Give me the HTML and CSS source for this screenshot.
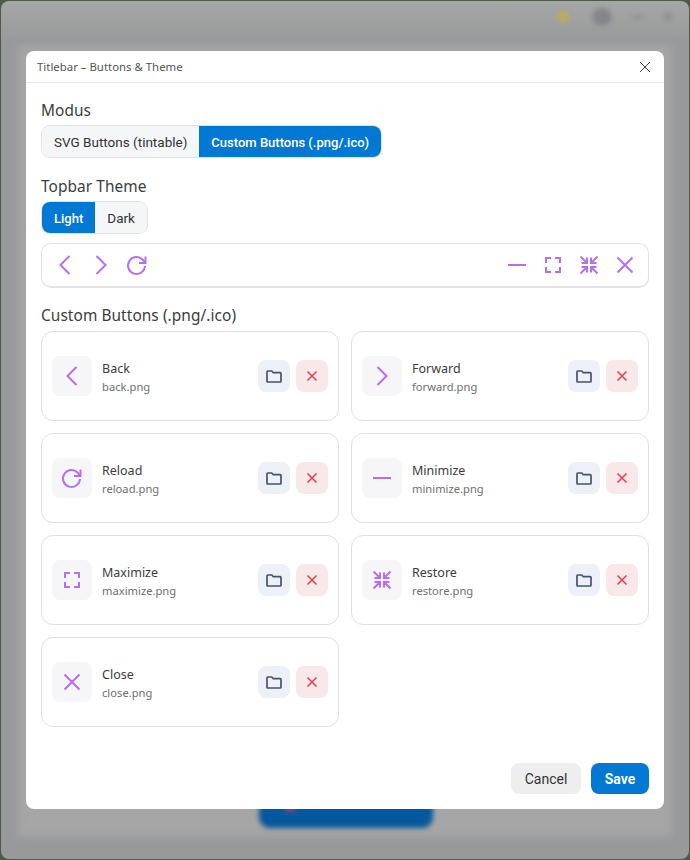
FILE: index.html
```html
<!DOCTYPE html>
<html lang="en">
<head>
    <meta charset="UTF-8">
    <meta name="viewport" content="width=device-width, initial-scale=1.0">
    <title>Titlebar – Buttons &amp; Theme</title>
    <link rel="stylesheet" href="styles.css">
</head>
<body>
    <svg class="defs" width="0" height="0" aria-hidden="true">
        <defs>
            <symbol id="i-back" viewBox="0 0 24 24"><path d="M16.500 3 7.500 12l9 9"/></symbol>
            <symbol id="i-forward" viewBox="0 0 24 24"><path d="M7.500 3 16.500 12l-9 9"/></symbol>
            <symbol id="i-reload" viewBox="0 0 24 24"><path d="M20 13a8.500 8.500 0 1 1-2.300-6.300L20.500 10"/><path d="M20.500 3.500V10H14"/></symbol>
            <symbol id="i-min" viewBox="0 0 24 24"><path d="M3 12h18"/></symbol>
            <symbol id="i-max" viewBox="0 0 24 24"><path d="M10 5H5v5M14 5h5v5M10 19H5v-5M14 19h5v-5"/></symbol>
            <symbol id="i-restore" viewBox="0 0 24 24"><path d="M3.500 3.500l6.500 6.500M10 4.500V10H4.500M20.500 3.500L14 10M14 4.500V10h5.500M3.500 20.500L10 14M10 19.500V14H4.500M20.500 20.500L14 14M14 19.500V14h5.500"/></symbol>
            <symbol id="i-close" viewBox="0 0 24 24"><path d="M4.500 4.500l15 15M19.500 4.500l-15 15"/></symbol>
            <symbol id="i-folder" viewBox="0 0 16 16"><path d="M1 3.800c0-.5.300-.8.800-.8h4l1.500 1.700h6.900c.5 0 .8.300.8.800v7.700c0 .5-.3.800-.8.800H1.800c-.5 0-.8-.3-.8-.8z"/></symbol>
            <symbol id="i-x" viewBox="0 0 16 16"><path d="M3.500 3.500l9 9M12.500 3.500l-9 9"/></symbol>
        </defs>
    </svg>

    <div class="desktop">
        <div class="app-window">
            <div class="blur-panel"></div>
            <div class="blur-icons">
                <span class="blur-dot yellow"></span>
                <span class="blur-dot grey"></span>
                <span class="blur-dot dash"></span>
                <span class="blur-dot faint"></span>
            </div>
            <div class="blur-button"><span class="blur-spot"></span></div>
        </div>

        <div class="modal">
            <div class="modal-header">
                <span class="modal-title">Titlebar – Buttons &amp; Theme</span>
                <svg class="modal-close" viewBox="0 0 12 12"><path d="M1 1l10 10M11 1L1 11"/></svg>
            </div>

            <div class="modal-body">
                <div class="section-label">Modus</div>
                <div class="segmented">
                    <button class="seg">SVG Buttons (tintable)</button>
                    <button class="seg active">Custom Buttons (.png/.ico)</button>
                </div>

                <div class="section-label theme-label">Topbar Theme</div>
                <div class="segmented">
                    <button class="seg active">Light</button>
                    <button class="seg">Dark</button>
                </div>

                <div class="preview">
                    <div class="preview-group">
                        <svg class="ico"><use href="#i-back"/></svg>
                        <svg class="ico"><use href="#i-forward"/></svg>
                        <svg class="ico"><use href="#i-reload"/></svg>
                    </div>
                    <div class="preview-group">
                        <svg class="ico"><use href="#i-min"/></svg>
                        <svg class="ico"><use href="#i-max"/></svg>
                        <svg class="ico"><use href="#i-restore"/></svg>
                        <svg class="ico"><use href="#i-close"/></svg>
                    </div>
                </div>

                <div class="section-label custom-label">Custom Buttons (.png/.ico)</div>
                <div class="card-grid">
                    <div class="card">
                        <div class="tile"><svg class="ico"><use href="#i-back"/></svg></div>
                        <div class="card-text"><div class="card-name">Back</div><div class="card-file">back.png</div></div>
                        <button class="icon-btn open"><svg><use href="#i-folder"/></svg></button>
                        <button class="icon-btn remove"><svg><use href="#i-x"/></svg></button>
                    </div>
                    <div class="card">
                        <div class="tile"><svg class="ico"><use href="#i-forward"/></svg></div>
                        <div class="card-text"><div class="card-name">Forward</div><div class="card-file">forward.png</div></div>
                        <button class="icon-btn open"><svg><use href="#i-folder"/></svg></button>
                        <button class="icon-btn remove"><svg><use href="#i-x"/></svg></button>
                    </div>
                    <div class="card">
                        <div class="tile"><svg class="ico"><use href="#i-reload"/></svg></div>
                        <div class="card-text"><div class="card-name">Reload</div><div class="card-file">reload.png</div></div>
                        <button class="icon-btn open"><svg><use href="#i-folder"/></svg></button>
                        <button class="icon-btn remove"><svg><use href="#i-x"/></svg></button>
                    </div>
                    <div class="card">
                        <div class="tile"><svg class="ico"><use href="#i-min"/></svg></div>
                        <div class="card-text"><div class="card-name">Minimize</div><div class="card-file">minimize.png</div></div>
                        <button class="icon-btn open"><svg><use href="#i-folder"/></svg></button>
                        <button class="icon-btn remove"><svg><use href="#i-x"/></svg></button>
                    </div>
                    <div class="card">
                        <div class="tile"><svg class="ico"><use href="#i-max"/></svg></div>
                        <div class="card-text"><div class="card-name">Maximize</div><div class="card-file">maximize.png</div></div>
                        <button class="icon-btn open"><svg><use href="#i-folder"/></svg></button>
                        <button class="icon-btn remove"><svg><use href="#i-x"/></svg></button>
                    </div>
                    <div class="card">
                        <div class="tile"><svg class="ico"><use href="#i-restore"/></svg></div>
                        <div class="card-text"><div class="card-name">Restore</div><div class="card-file">restore.png</div></div>
                        <button class="icon-btn open"><svg><use href="#i-folder"/></svg></button>
                        <button class="icon-btn remove"><svg><use href="#i-x"/></svg></button>
                    </div>
                    <div class="card">
                        <div class="tile"><svg class="ico"><use href="#i-close"/></svg></div>
                        <div class="card-text"><div class="card-name">Close</div><div class="card-file">close.png</div></div>
                        <button class="icon-btn open"><svg><use href="#i-folder"/></svg></button>
                        <button class="icon-btn remove"><svg><use href="#i-x"/></svg></button>
                    </div>
                </div>
            </div>

            <div class="modal-footer">
                <button class="btn cancel">Cancel</button>
                <button class="btn save">Save</button>
            </div>
        </div>
    </div>
</body>
</html>
```

FILE: styles.css
```css
* { box-sizing: border-box; }
html, body { margin: 0; height: 100%; overflow: hidden; }
body { background: #4e5a48; font-family: "Noto Sans", "Liberation Sans", sans-serif; color: #333; }
button { font-family: Roboto, "Liberation Sans", sans-serif; border: 0; margin: 0; padding: 0; }
.defs { position: absolute; }

.desktop { position: relative; width: 690px; height: 860px; padding: 51px 26px; }

/* window behind the dialog, dimmed and blurred */
.app-window {
    position: absolute;
    inset: 1px;
    border-radius: 8px;
    overflow: hidden;
    background: linear-gradient(#a5a7a5 0, #a0a2a1 18px, #98999b 40px, #98999b 100%);
}
.blur-panel {
    position: absolute;
    inset: 44px 17px 22px;
    background: #a6a6a6;
    filter: blur(4px);
}
.blur-icons { position: absolute; top: 6px; right: 16px; display: flex; align-items: center; height: 20px; filter: blur(2.500px); }
.blur-dot { display: block; width: 10px; height: 10px; border-radius: 50%; }
.blur-dot.yellow { width: 12px; height: 12px; margin-right: 23px; background: #bcab5c; }
.blur-dot.grey { width: 20px; height: 18px; margin-right: 19px; background: #84858a; }
.blur-dot.dash { width: 14px; height: 4px; margin-right: 18px; background: #8f9193; }
.blur-dot.faint { background: #8f9193; }
.blur-button {
    position: absolute;
    left: 258px;
    top: 780px;
    width: 174px;
    height: 47px;
    border-radius: 11px;
    background: #05589c;
    filter: blur(2.500px);
}
.blur-spot {
    position: absolute;
    left: 26px;
    top: 24px;
    width: 10px;
    height: 6px;
    background: #a0466a;
}

.modal {
    position: relative;
    display: flex;
    flex-direction: column;
    width: 638px;
    height: 758px;
    background: #fff;
    border-radius: 8px;
}
.modal-header {
    display: flex;
    justify-content: space-between;
    align-items: center;
    height: 32px;
    padding: 0 13px 0 11px;
    border-bottom: 1px solid #eaeaea;
}
.modal-title { font-size: 11.400px; color: #555; }
.modal-close { width: 12px; height: 12px; fill: none; stroke: #444; stroke-width: 1; }

.modal-body { flex: 1; padding: 18px 15px 0; }
.section-label { font-size: 15.400px; letter-spacing: .08px; line-height: 20px; color: #3c3c3c; margin-bottom: 4px; }
.theme-label { margin-top: 19px; }
.custom-label { margin-top: 18px; margin-bottom: 5px; }

.segmented {
    display: inline-flex;
    vertical-align: top;
    border: 1px solid #e2e2e4;
    border-radius: 9px;
    overflow: hidden;
    background: #f5f6f8;
}
.seg { height: 31px; padding: 0 12px; font-size: 13.500px; color: #333; background: #f5f6f8; }
.seg.active { padding-top: 1px; background: #0078d4; color: #fff; font-size: 13px; font-weight: 500; }

.preview {
    display: flex;
    justify-content: space-between;
    align-items: center;
    height: 45px;
    margin-top: 9px;
    padding: 0 11px;
    border: 1px solid #e3e3e3;
    border-bottom-width: 2px;
    border-radius: 10px;
}
.preview-group { display: flex; gap: 12px; }
.ico { display: block; width: 24px; height: 24px; fill: none; stroke: #b56ef5; stroke-width: 2; }

.card-grid { display: grid; grid-template-columns: 298px 298px; gap: 12px; }
.card {
    display: flex;
    align-items: center;
    height: 90px;
    padding: 0 10px;
    border: 1px solid #e0e0e0;
    border-radius: 12px;
}
.tile {
    display: flex;
    align-items: center;
    justify-content: center;
    width: 40px;
    height: 40px;
    margin-right: 10px;
    border-radius: 8px;
    background: #f6f6f9;
}
.card-text { flex: 1; padding-top: 3px; }
.card-name { font-size: 12.500px; line-height: 19px; color: #3c3c3c; }
.card-file { font-size: 11.200px; line-height: 18px; color: #6f6f6f; }

.icon-btn {
    display: flex;
    align-items: center;
    justify-content: center;
    width: 32px;
    height: 32px;
    border-radius: 8px;
}
.icon-btn svg { width: 16px; height: 16px; fill: none; stroke-width: 1.500; }
.icon-btn.open { background: #edf0f6; margin-right: 6px; }
.icon-btn.open svg { stroke: #44546e; stroke-width: 1.700; }
.icon-btn.remove { background: #f8e8e9; }
.icon-btn.remove svg { stroke: #e0404c; }

.modal-footer { display: flex; justify-content: flex-end; gap: 10px; padding: 0 15px 15px; }
.btn { height: 31px; border-radius: 8px; font-size: 14px; }
.btn.cancel { width: 70px; background: #eeeeee; color: #333; }
.btn.save { width: 58px; background: #0078d4; color: #fff; font-weight: 700; }
```
